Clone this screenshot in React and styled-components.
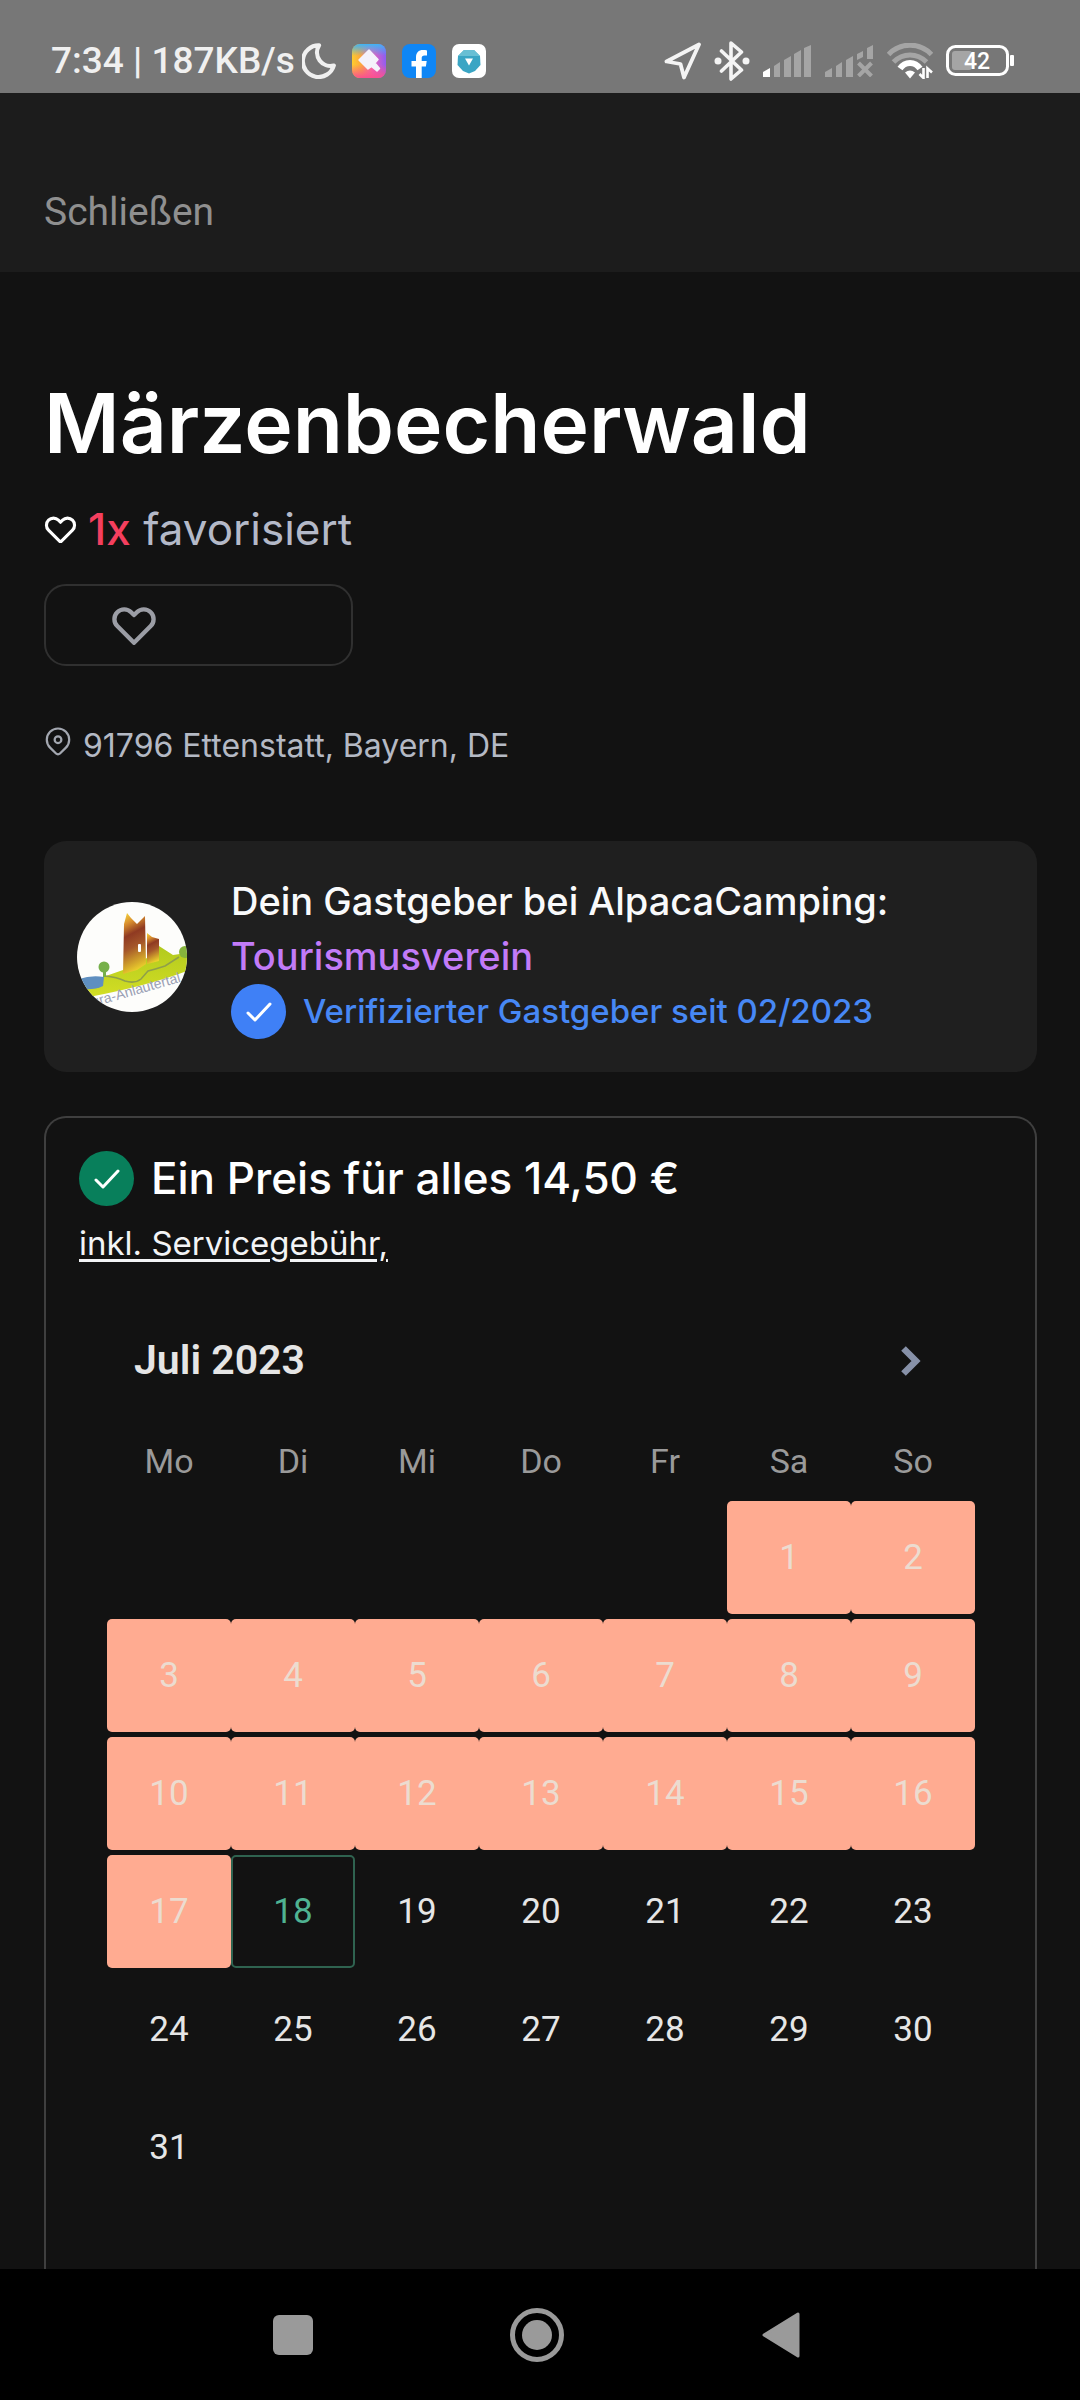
import styled, { createGlobalStyle } from "styled-components";

const GlobalStyle = createGlobalStyle`
  * {
    box-sizing: border-box;
  }

  body {
    margin: 0;
    background: #121212;
    font-family: Inter, "Liberation Sans", sans-serif;
  }
`;

const Screen = styled.div`
  min-height: 100vh;
  display: flex;
  flex-direction: column;
`;

/* ---------- status bar ---------- */

const StatusBar = styled.div`
  height: 93px;
  padding: 28px 66px 0 51px;
  display: flex;
  justify-content: space-between;
  align-items: center;
  background: #777777;
  color: #f0f0f0;
  font-family: Roboto, sans-serif;
`;

const StatusGroup = styled.div`
  display: flex;
  align-items: center;
  gap: ${(props) => props.$gap}px;
`;

const StatusText = styled.span`
  font-size: 37px;
  font-weight: 500;
  line-height: 44px;
  white-space: pre;
  margin-right: -9px;
`;

/* ---------- page ---------- */

const Header = styled.header`
  height: 179px;
  padding: 60px 44px 0;
  display: flex;
  align-items: center;
  background: #1c1c1c;
`;

const CloseBtn = styled.button`
  padding: 0;
  border: none;
  background: none;
  color: #8f8f8f;
  font-family: Roboto, sans-serif;
  font-size: 39px;
  line-height: 55px;
`;

const Main = styled.main`
  flex: 1;
  display: flex;
  flex-direction: column;
  padding: 102px 43px 0 44px;
`;

const Title = styled.h1`
  margin: 0;
  color: #ffffff;
  font-size: 82px;
  font-weight: 600;
  line-height: 100px;
`;

const Favorites = styled.p`
  margin: 22px 0;
  display: flex;
  align-items: center;
  gap: 11px;
  color: #b4b9c8;
  font-size: 44px;
  line-height: 66px;
`;

const Count = styled.span`
  color: #f43f5e;
  font-weight: 500;
`;

const FavoriteBtn = styled.button`
  width: 309px;
  height: 82px;
  padding: 0 65px;
  display: flex;
  align-items: center;
  border: 2px solid #303030;
  border-radius: 22px;
  background: none;
`;

const Address = styled.p`
  margin: 58px 0 73px;
  display: flex;
  align-items: center;
  gap: 11px;
  color: #b4b9c4;
  font-size: 32px;
  line-height: 44px;
`;

const HostCard = styled.section`
  padding: 33px;
  display: flex;
  align-items: center;
  gap: 44px;
  border-radius: 22px;
  background: #1f1f1f;
`;

const HostText = styled.div`
  color: #f9fafb;
  font-size: 38px;
  font-weight: 500;
  line-height: 55px;
`;

const HostLink = styled.a`
  display: block;
  color: #c27bf8;
  text-decoration: none;
`;

const Verified = styled.div`
  display: flex;
  align-items: center;
  gap: 17px;
  color: #4788f5;
  font-size: 33px;
`;

const CheckBadge = styled.span`
  width: 55px;
  height: 55px;
  display: flex;
  align-items: center;
  justify-content: center;
  border-radius: 50%;
  background: ${(props) => props.$color};
`;

const PriceCard = styled.section`
  flex: 1;
  margin-top: 44px;
  padding: 33px 33px 60px;
  border: 2px solid #3f3f3f;
  border-bottom: none;
  border-radius: 22px 22px 0 0;
`;

const Price = styled.h2`
  margin: 0;
  display: flex;
  align-items: center;
  gap: 17px;
  color: #ffffff;
  font-size: 44px;
  font-weight: 500;
  line-height: 55px;
`;

const FeeLink = styled.a`
  display: block;
  width: fit-content;
  margin-top: 15px;
  color: #f3f4f6;
  font-size: 33px;
  line-height: 44px;
  text-underline-offset: 4px;
  text-decoration-thickness: 3px;
`;

/* ---------- calendar ---------- */

const Calendar = styled.div`
  margin: 73px 27px 0 28px;
  font-family: Roboto, sans-serif;
`;

const CalendarHead = styled.div`
  padding: 0 50px 0 27px;
  display: flex;
  align-items: center;
  justify-content: space-between;
`;

const Month = styled.h3`
  margin: 0;
  color: #e5e5e5;
  font-size: 41px;
  font-weight: 600;
  line-height: 44px;
`;

const NextBtn = styled.button`
  height: 44px;
  padding: 2px 4px 0;
  display: flex;
  align-items: center;
  border: none;
  background: none;
`;

const MonthTable = styled.table`
  width: 100%;
  margin-top: 52px;
  table-layout: fixed;
  border-spacing: 0 5px;
`;

const Weekday = styled.th`
  padding: 0 0 13px;
  color: #9a9a9a;
  font-size: 34px;
  font-weight: 400;
  line-height: 44px;
`;

const DayCell = styled.td`
  padding: 0;
`;

const dayColors = {
  booked: "#ecdcd0",
  today: "#4fb392",
  free: "#e6e6e6",
};

const DayBtn = styled.button`
  display: block;
  width: 100%;
  height: 113px;
  padding: 0;
  border: 2px solid ${(props) => (props.$state === "today" ? "#2f6350" : "transparent")};
  border-radius: 5px;
  background: ${(props) => (props.$state === "booked" ? "#ffab91" : "none")};
  color: ${(props) => dayColors[props.$state]};
  font-family: inherit;
  font-size: 35px;
`;

/* ---------- system navigation ---------- */

const NavBar = styled.nav`
  height: 131px;
  padding-right: 6px;
  display: flex;
  justify-content: center;
  align-items: center;
  gap: 184px;
  background: #000000;
`;

const NavBtn = styled.button`
  width: 60px;
  height: 60px;
  padding: 0;
  display: flex;
  align-items: center;
  justify-content: center;
  border: none;
  background: none;
`;

const HeartIcon = ({ size, color }) => (
  <svg width={size} height={size * 0.875} viewBox="2 3 20 18.5" fill="none" stroke={color} strokeWidth="2" strokeLinecap="round" strokeLinejoin="round">
    <path d="M4.318 6.318a4.5 4.5 0 000 6.364L12 20.364l7.682-7.682a4.5 4.5 0 00-6.364-6.364L12 7.636l-1.318-1.318a4.5 4.5 0 00-6.364 0z" />
  </svg>
);

const PinIcon = () => (
  <svg width="28" height="38" viewBox="2 2 20 27" fill="none" stroke="#a3a7b0" strokeWidth="1.6" strokeLinecap="round" strokeLinejoin="round">
    <path d="M17.657 16.657L13.414 20.9a1.998 1.998 0 01-2.827 0l-4.244-4.243a8 8 0 1111.314 0z" />
    <circle cx="12" cy="11" r="2.4" />
  </svg>
);

const CheckIcon = () => (
  <svg width="26" height="20" viewBox="0 0 26 20" fill="none" stroke="#ffffff" strokeWidth="3" strokeLinecap="round" strokeLinejoin="round">
    <path d="M2 11l7 7L24 2" />
  </svg>
);

const MoonIcon = () => (
  <svg width="34" height="36" viewBox="0 0 34 36" fill="none" stroke="#f0f0f0" strokeWidth="4.2" strokeLinejoin="round">
    <path d="M17 2.4A15.800 15.800 0 1 0 31.800 22.5A13.5 13.5 0 0 1 17 2.4z" />
  </svg>
);

const ThemesAppIcon = () => (
  <svg width="34" height="34" viewBox="0 0 34 34">
    <defs>
      <linearGradient id="themeA" x1="0" y1="0.4" x2="1" y2="0.3">
        <stop offset="0" stopColor="#fdcb2e" />
        <stop offset="0.25" stopColor="#fba83c" />
        <stop offset="0.55" stopColor="#f765b0" />
        <stop offset="1" stopColor="#8a5cf5" />
      </linearGradient>
      <linearGradient id="themeB" x1="0" y1="0" x2="0" y2="1">
        <stop offset="0" stopColor="#3fb4f5" />
        <stop offset="0.35" stopColor="#3fb4f5" stopOpacity="0" />
        <stop offset="0.6" stopColor="#fa5090" stopOpacity="0" />
        <stop offset="1" stopColor="#fa5090" />
      </linearGradient>
    </defs>
    <rect width="34" height="34" rx="8" fill="url(#themeA)" />
    <rect width="34" height="34" rx="8" fill="url(#themeB)" />
    <path d="M17 6l9 9.500-3 3.500 4.500 5.500-2.500 2.500-5.500-4.500-3.500 2.500L7 16z" fill="#f4f1fb" stroke="#f4f1fb" strokeWidth="1.5" strokeLinejoin="round" />
  </svg>
);

const FacebookIcon = () => (
  <svg width="34" height="34" viewBox="0 0 34 34">
    <rect width="34" height="34" rx="8" fill="#0f86f5" />
    <path d="M14 34V22.500h-4.500v-5.500H14v-3.500c0-5 2.500-7.500 7-7.500 1.500 0 3 .2 4 .4v5h-2.500c-2 0-2.800 1-2.800 2.600v3h5l-.8 5.500h-4.200V34z" fill="#ffffff" />
  </svg>
);

const GemAppIcon = () => (
  <svg width="34" height="34" viewBox="0 0 34 34">
    <rect width="34" height="34" rx="7" fill="#ffffff" />
    <path d="M12 6h10l6 6 .5 9-5.500 6-6 2.500-6-2.500-5.500-6 .5-9z" fill="#3aa5c4" />
    <path d="M12 6h10l6 6H6z" fill="#68bfd4" />
    <path d="M13 14.500h8l-4 7z" fill="#ffffff" />
  </svg>
);

const LocationIcon = () => (
  <svg width="37" height="38" viewBox="0 0 37 38" fill="none" stroke="#f4f4f4" strokeWidth="3.8" strokeLinejoin="round">
    <path d="M35 2.500L2.500 19.500l14 2.500 3.500 13.500z" />
  </svg>
);

const BluetoothIcon = () => (
  <svg width="36" height="40" viewBox="0 0 36 40">
    <path d="M7.500 10l20 19L17 38V2l10.500 9-20 19" fill="none" stroke="#f4f4f4" strokeWidth="3.600" strokeLinejoin="round" strokeLinecap="round" />
    <circle cx="4" cy="20" r="3.500" fill="#f4f4f4" />
    <circle cx="32" cy="20" r="3.500" fill="#f4f4f4" />
  </svg>
);

const SignalIcon = () => (
  <svg width="49" height="32" viewBox="0 0 49 32" fill="#a5a5a5">
    <path d="M0 27l7-4v9H0z" fill="#ffffff" />
    <path d="M11 21l6-4v15h-6zM21 15l7-4v21h-7zM31 9l7-4v27h-7zM41 3l7-3v32h-7z" />
  </svg>
);

const NoSignalIcon = () => (
  <svg width="49" height="32" viewBox="0 0 49 32" fill="#a5a5a5">
    <path d="M0 27l7-4v9H0zM11 21l6-4v15h-6zM21 15l7-4v21h-7zM32 9l6-3v6l-6 3zM42 3l6-3v14h-6z" />
    <path d="M33.500 18l13 13M46.500 18l-13 13" stroke="#a5a5a5" strokeWidth="4" />
  </svg>
);

const WifiIcon = () => (
  <svg width="46" height="36" viewBox="0 0 46 36" fill="none">
    <path d="M1.500 11.500C13-1 33-1 44.500 11.500" stroke="#a5a5a5" strokeWidth="5" />
    <path d="M6.500 19C16 9.500 30 9.500 39.500 19" stroke="#a5a5a5" strokeWidth="5" />
    <path d="M13 25.500C18 18 28 18 33 25.500" stroke="#ffffff" strokeWidth="6" />
    <path d="M18 29.500q5-4 10 0l-5 6z" fill="#ffffff" />
    <path d="M36.500 25v10l-4-4M40.500 35V25.500l4.500 4" stroke="#ffffff" strokeWidth="2.600" />
  </svg>
);

const BatteryIcon = () => (
  <svg width="68" height="31" viewBox="0 0 68 31">
    <rect x="1.500" y="1.500" width="60" height="28" rx="8" fill="none" stroke="#ffffff" strokeWidth="3" />
    <rect x="6" y="6" width="20" height="19" rx="3" fill="#a5a5a5" />
    <rect x="64" y="10" width="4" height="11" rx="1" fill="#ffffff" />
    <text x="31" y="24" textAnchor="middle" fontFamily="Roboto, sans-serif" fontSize="23" fontWeight="500" fill="#ffffff">42</text>
  </svg>
);

const ChevronIcon = () => (
  <svg width="20" height="30" viewBox="0 0 20 30" fill="none" stroke="#8791a8" strokeWidth="6.500">
    <path d="M2.500 2.500L15 15 2.500 27.500" />
  </svg>
);

// castle logo of the tourist association
const HostAvatar = () => (
  <svg width="110" height="110" viewBox="0 0 110 110" role="img" aria-label="Tourismusverein">
    <defs>
      <clipPath id="round">
        <circle cx="55" cy="55" r="55" />
      </clipPath>
      <linearGradient id="tower" x1="0.1" y1="0" x2="0.3" y2="1">
        <stop offset="0" stopColor="#f5d53c" />
        <stop offset="0.18" stopColor="#d98f2e" />
        <stop offset="0.38" stopColor="#8f3a22" />
        <stop offset="0.6" stopColor="#a4562a" />
        <stop offset="1" stopColor="#ecd02c" />
      </linearGradient>
      <linearGradient id="hill" x1="0" y1="0" x2="0" y2="1">
        <stop offset="0" stopColor="#b2ca1e" />
        <stop offset="1" stopColor="#d3de24" />
      </linearGradient>
    </defs>
    <g clipPath="url(#round)">
      <rect width="110" height="110" fill="#fdfdfb" />
      <path d="M2 86L26 75l20-7 24-12 12-12 14 9 14-2v18Q70 84 12 95z" fill="url(#hill)" />
      <path d="M2 77q12-4 25-2l-1 9q-8 4-20 3z" fill="#5f8fc0" />
      <path d="M50 11l4 5 6 6 8-8 1 48-9 6-14 4 1-50z" fill="url(#tower)" />
      <path d="M70 31l5 4 7 2v22l-12 3z" fill="url(#tower)" />
      <rect x="61" y="42" width="3" height="8" rx="1" fill="#ffffff" />
      <path d="M28 74q12 1 20 5 10 3 16-2l7-8q8-2 17-5l14-9" fill="none" stroke="#8f9f4a" strokeWidth="1.500" />
      <circle cx="27" cy="65" r="5.500" fill="#76b04a" />
      <path d="M26 66h3v9h-3z" fill="#76b04a" />
      <circle cx="108" cy="50" r="6" fill="#86b43c" />
      <text x="16" y="105" transform="rotate(-16 16 105)" fontFamily="Liberation Sans, sans-serif" fontSize="14" fill="#9aa0b4">ura-Anlautertal</text>
    </g>
  </svg>
);

const weekdays = ["Mo", "Di", "Mi", "Do", "Fr", "Sa", "So"];
const firstColumn = 5;
const today = 18;

const weeks = Array.from({ length: 6 }, (_, week) =>
  weekdays.map((_, column) => {
    const day = week * 7 + column - firstColumn + 1;
    return day > 0 && day <= 31 ? day : null;
  })
);

const getState = (day) => {
  if (day < today) return "booked";
  return day === today ? "today" : "free";
};

const App = () => {
  return (
    <Screen>
      <GlobalStyle />
      <StatusBar>
        <StatusGroup $gap={16}>
          <StatusText>7:34 | 187KB/s</StatusText>
          <MoonIcon />
          <ThemesAppIcon />
          <FacebookIcon />
          <GemAppIcon />
        </StatusGroup>
        <StatusGroup $gap={13}>
          <LocationIcon />
          <BluetoothIcon />
          <SignalIcon />
          <NoSignalIcon />
          <WifiIcon />
          <BatteryIcon />
        </StatusGroup>
      </StatusBar>
      <Header>
        <CloseBtn>Schließen</CloseBtn>
      </Header>
      <Main>
        <Title>Märzenbecherwald</Title>
        <Favorites>
          <HeartIcon size={33} color="#ffffff" />
          <span>
            <Count>1x</Count> favorisiert
          </span>
        </Favorites>
        <FavoriteBtn aria-label="Favorisieren">
          <HeartIcon size={46} color="#9b9da5" />
        </FavoriteBtn>
        <Address>
          <PinIcon />
          91796 Ettenstatt, Bayern, DE
        </Address>
        <HostCard>
          <HostAvatar />
          <HostText>
            Dein Gastgeber bei AlpacaCamping:
            <HostLink href="#gastgeber">Tourismusverein</HostLink>
            <Verified>
              <CheckBadge $color="#3f80f6">
                <CheckIcon />
              </CheckBadge>
              Verifizierter Gastgeber seit 02/2023
            </Verified>
          </HostText>
        </HostCard>
        <PriceCard>
          <Price>
            <CheckBadge $color="#087f5b">
              <CheckIcon />
            </CheckBadge>
            Ein Preis für alles 14,50 €
          </Price>
          <FeeLink href="#servicegebuehr">inkl. Servicegebühr,</FeeLink>
          <Calendar>
            <CalendarHead>
              <Month>Juli 2023</Month>
              <NextBtn aria-label="Nächster Monat">
                <ChevronIcon />
              </NextBtn>
            </CalendarHead>
            <MonthTable>
              <thead>
                <tr>
                  {weekdays.map((name) => (
                    <Weekday key={name} scope="col">{name}</Weekday>
                  ))}
                </tr>
              </thead>
              <tbody>
                {weeks.map((week, index) => (
                  <tr key={index}>
                    {week.map((day, column) => (
                      <DayCell key={column}>
                        {day && <DayBtn $state={getState(day)}>{day}</DayBtn>}
                      </DayCell>
                    ))}
                  </tr>
                ))}
              </tbody>
            </MonthTable>
          </Calendar>
        </PriceCard>
      </Main>
      <NavBar>
        <NavBtn aria-label="Übersicht">
          <svg width="40" height="40" viewBox="0 0 40 40">
            <rect width="40" height="40" rx="6" fill="#9a9a9a" />
          </svg>
        </NavBtn>
        <NavBtn aria-label="Startbildschirm">
          <svg width="54" height="54" viewBox="0 0 54 54">
            <circle cx="27" cy="27" r="24.500" fill="none" stroke="#9a9a9a" strokeWidth="5" />
            <circle cx="27" cy="27" r="15" fill="#9a9a9a" />
          </svg>
        </NavBtn>
        <NavBtn aria-label="Zurück">
          <svg width="38" height="46" viewBox="0 0 38 46">
            <path d="M36 2v42L2 23z" fill="#9a9a9a" stroke="#9a9a9a" strokeWidth="3" strokeLinejoin="round" />
          </svg>
        </NavBtn>
      </NavBar>
    </Screen>
  );
};

export default App;
